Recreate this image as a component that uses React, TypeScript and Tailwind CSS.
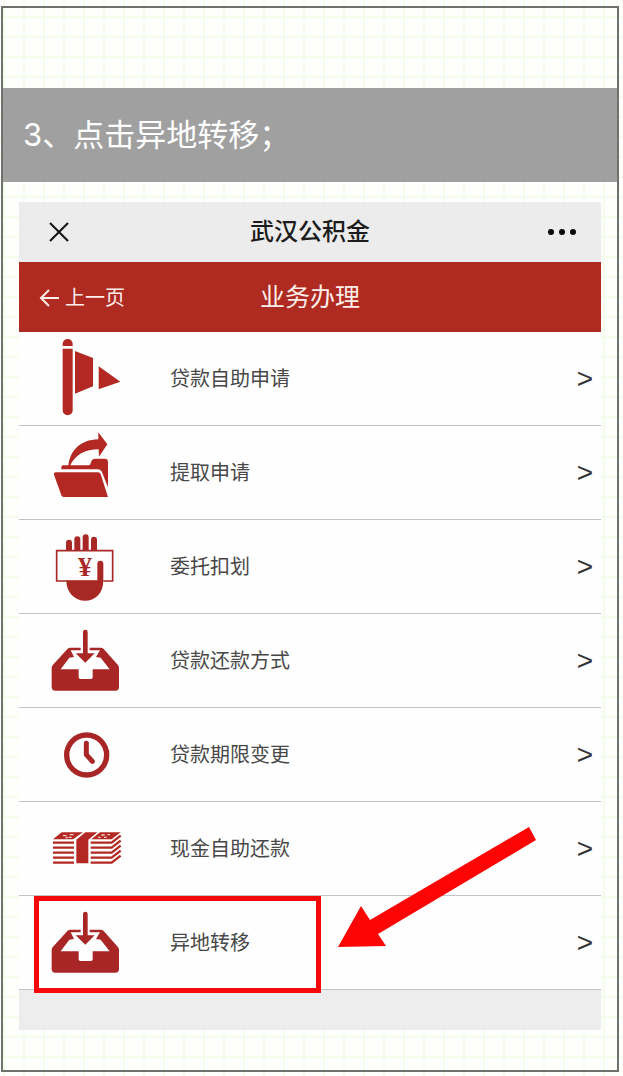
import type { ReactNode } from 'react';

interface MenuItem {
  id: string;
  label: string;
  icon: ReactNode;
  highlighted?: boolean;
}

function IconFrame({ children }: { children: ReactNode }) {
  return (
    <svg viewBox="0 0 360 282" className="h-[94px] w-[120px] shrink-0" aria-hidden="true">
      {children}
    </svg>
  );
}

function FlagIcon() {
  return (
    <IconFrame>
      <g fill="#b32822">
        <path d="M98 42V36a15 15 0 0 1 30 0v6z" />
        <path d="M98 50h30v185a15 15 0 0 1-30 0z" />
        <path d="M135 57l54 21v85l-54 22z" />
        <path d="M206 103l65 46-65 23z" />
      </g>
    </IconFrame>
  );
}

function FolderIcon() {
  return (
    <IconFrame>
      <g fill="#b32822">
        <path d="M115 122C118 76 150 41 205 40V19l27 36-25 37-1-22C166 70 135 85 119 122z" />
        <path d="M94 130v-6q0-6 6-6h76q5 0 6-6 2-14 14-14h28q10 0 10 10v76l-17-43q-4-11-14-11z" />
        <path d="M78 139h126q6 0 8 6l22 68H101q-5 0-7-5L72 146q-2-7 6-7z" />
      </g>
    </IconFrame>
  );
}

function CashHandIcon() {
  return (
    <IconFrame>
      <g fill="#a82825">
        <path d="M108 92V68a9 9 0 0 1 18 0v24z" />
        <path d="M133 92V58a9 9 0 0 1 18 0v34z" />
        <path d="M158 92V52a9 9 0 0 1 18 0v40z" />
        <path d="M183 92V59a9 9 0 0 1 18 0v33z" />
        <path d="M109 182h93v-51a9 9 0 0 1 18 0v51c0 38-25 60-55 60s-56-24-56-60z" />
      </g>
      <path d="M202 183H80V92h168v91h-28" fill="none" stroke="#a82825" strokeWidth="5" />
      <text
        x="165"
        y="169"
        textAnchor="middle"
        fill="#a82825"
        className="font-['Liberation_Serif',serif] text-[84px] font-bold"
      >
        ¥
      </text>
    </IconFrame>
  );
}

function InboxIcon() {
  return (
    <IconFrame>
      <path
        d="M113 104q3-3 8-3h91q5 0 9 4l42 47q4 4 4 10v57q0 11-11 11H76q-11 0-11-11v-57q0-6 4-10z"
        fill="#a82626"
      />
      <path
        d="M122 109h88l-12 20 14 2 27 35h-51v24q0 5-5 5h-32q-5 0-5-5v-24H92l26-35 14-2z"
        fill="#fefefe"
      />
      <path d="M152 96h27v16h-27z" fill="#fefefe" />
      <path d="M159 54a7 7 0 0 1 14 0v64h21l-28 28-29-28h22z" fill="#a82626" />
    </IconFrame>
  );
}

function ClockIcon() {
  return (
    <IconFrame>
      <circle cx="170" cy="141" r="60" fill="none" stroke="#a82626" strokeWidth="16" />
      <path
        d="M169 106v34l18 20"
        fill="none"
        stroke="#a82626"
        strokeWidth="15"
        strokeLinecap="round"
        strokeLinejoin="round"
      />
    </IconFrame>
  );
}

function BanknotesIcon() {
  return (
    <IconFrame>
      <g fill="#b32822">
        <path d="M95 91h64l-30 21H69z" />
        <path d="M210 91h62l-27 21h-61z" />
        <path d="M166 91h36l-27 22v71h-36v-71z" />
      </g>
      <path
        d="M69 122h63M69 137h63M69 152h63M69 167h63M69 182h63M182 122h63l27-21M182 137h63l27-21M182 152h63l27-21M182 167h63l27-21M182 182h63l27-21"
        fill="none"
        stroke="#b32822"
        strokeWidth="7"
      />
      <path
        d="M99 101h11M107 107h7M119 98h12M116 106h9M204 106h8M214 99h10M222 106h8M232 98h8"
        fill="none"
        stroke="#f6cfca"
        strokeWidth="4"
      />
    </IconFrame>
  );
}

const menuItems: MenuItem[] = [
  { id: 'loan-apply', label: '贷款自助申请', icon: <FlagIcon /> },
  { id: 'withdraw', label: '提取申请', icon: <FolderIcon /> },
  { id: 'entrust', label: '委托扣划', icon: <CashHandIcon /> },
  { id: 'repay-method', label: '贷款还款方式', icon: <InboxIcon /> },
  { id: 'term-change', label: '贷款期限变更', icon: <ClockIcon /> },
  { id: 'cash-repay', label: '现金自助还款', icon: <BanknotesIcon /> },
  { id: 'transfer', label: '异地转移', icon: <InboxIcon />, highlighted: true },
];

function Highlight() {
  return (
    <div className="pointer-events-none absolute inset-0" aria-hidden="true">
      <div className="absolute top-0 left-[15px] h-[97px] w-[287px] border-[5px] border-[#f50808]" />
      <svg viewBox="0 0 200 120" className="absolute -top-[69px] left-[319px] h-[120px] w-[200px]">
        <path d="M0 120L23 79l9 14L191 0l7 13L40 107l8 12z" fill="#fb0505" />
      </svg>
    </div>
  );
}

function MenuRow({ item }: { item: MenuItem }) {
  return (
    <li className="relative">
      <button
        type="button"
        className="flex h-[94px] w-full items-center border-b border-[#c3c2c6] pr-2 pl-[11px] text-left"
      >
        {item.icon}
        <span className="ml-5 flex-1 pb-0.5 text-[20px] text-[#484848]">{item.label}</span>
        <span className="font-['Liberation_Sans',sans-serif] text-[28px] text-[#333338]">&gt;</span>
      </button>
      {item.highlighted && <Highlight />}
    </li>
  );
}

export default function App() {
  return (
    <div className="min-h-screen bg-[#fefffd] bg-[linear-gradient(to_right,#f4fdeb_2px,transparent_2px),linear-gradient(to_bottom,#f4fdeb_2px,transparent_2px)] bg-[size:20px_20px] bg-[position:3px_16px] pt-1.5 pr-1 pb-1 pl-px font-['Noto_Sans_CJK_SC',sans-serif]">
      <main className="border-2 border-[#6f716d] pt-20 pb-10">
        <h1 className="flex h-[94px] items-center bg-[#a0a0a0] px-5 font-['Inter','Noto_Sans_CJK_SC',sans-serif] text-[31px] text-white">
          3、点击异地转移；
        </h1>

        <section className="mx-4 mt-5 bg-[#eeedee]">
          <header className="grid h-[60px] grid-cols-[1fr_auto_1fr] items-center bg-[#ececec]">
            <button type="button" aria-label="关闭" className="ml-[30px] justify-self-start">
              <svg viewBox="0 0 20 20" className="size-5" fill="none" stroke="#111" strokeWidth="2">
                <path d="M1 1l18 18M19 1L1 19" />
              </svg>
            </button>
            <h2 className="pb-1 text-[24px] font-medium text-[#1c1c1c]">武汉公积金</h2>
            <button type="button" aria-label="更多" className="mr-6 justify-self-end">
              <svg viewBox="0 0 30 8" className="h-2 w-[30px]" fill="#0a0a0a">
                <circle cx="4" cy="4" r="3" />
                <circle cx="15" cy="4" r="3" />
                <circle cx="26" cy="4" r="3" />
              </svg>
            </button>
          </header>

          <nav className="grid h-[70px] grid-cols-[1fr_auto_1fr] items-center bg-[#af2a21] text-[#fdeeea]">
            <a href="#back" className="ml-5 flex items-center gap-1.5 justify-self-start text-[20px]">
              <svg viewBox="0 0 20 20" className="size-5" fill="none" stroke="currentColor" strokeWidth="2">
                <path d="M20 11H3M10 3l-8 8 8 8" />
              </svg>
              上一页
            </a>
            <h3 className="pb-0.5 text-[25px]">业务办理</h3>
          </nav>

          <ul className="bg-[#fefefe]">
            {menuItems.map((item) => (
              <MenuRow key={item.id} item={item} />
            ))}
          </ul>
          <div className="h-10" />
        </section>
      </main>
    </div>
  );
}
